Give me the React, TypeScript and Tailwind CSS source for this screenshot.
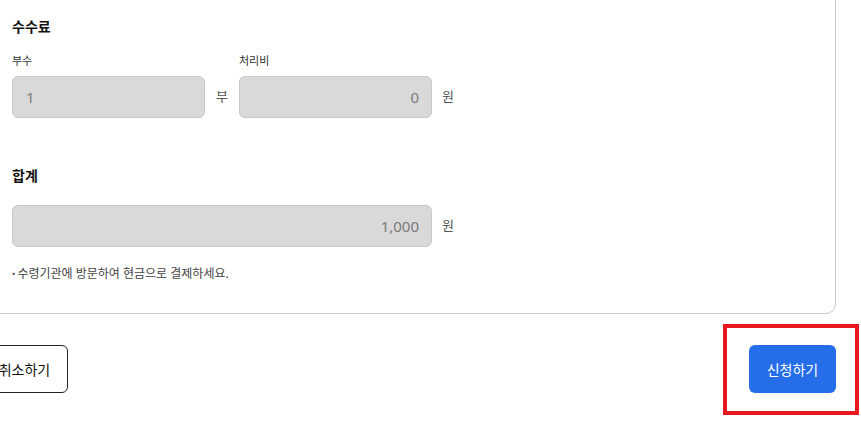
import React from 'react';

const font = { fontFamily: '"Noto Sans", "Noto Sans CJK KR", sans-serif' };

function ReadonlyField({ value, align = 'left', width }: { value: string; align?: 'left' | 'right'; width: string }) {
  return (
    <div
      className={`${width} h-[42px] flex items-center rounded-[6px] border border-[#c9c9c9] bg-[#d9d9d9] pl-[13px] pr-[12px] text-[15px] text-[#7a7a7a] ${
        align === 'right' ? 'justify-end' : 'justify-start'
      }`}
    >
      {value}
    </div>
  );
}

function App() {
  return (
    <div className="relative w-[861px] h-[428px] overflow-hidden bg-white text-[#222]" style={font}>
      <div className="ml-[-19px] mt-[-24px] w-[855px]">
        {/* fee card */}
        <section className="rounded-[10px] border border-[#c8c8c8] pl-[30px] pt-[40px] pb-[30px]">
          <h3 className="text-[14px] font-bold leading-[20px] text-[#111]">수수료</h3>

          <div className="mt-[16px] flex items-end">
            <div className="flex flex-col w-[193px]">
              <label className="text-[11px] leading-[16px] text-[#333]">부수</label>
              <div className="mt-[7px]">
                <ReadonlyField value="1" width="w-[193px]" />
              </div>
            </div>
            <span className="w-[34px] h-[42px] flex items-center justify-center text-[13px] text-[#555]">부</span>
            <div className="flex flex-col w-[193px]">
              <label className="text-[11px] leading-[16px] text-[#333]">처리비</label>
              <div className="mt-[7px]">
                <ReadonlyField value="0" align="right" width="w-[193px]" />
              </div>
            </div>
            <span className="ml-[10px] h-[42px] flex items-center text-[13px] text-[#555]">원</span>
          </div>

          <h3 className="mt-[48px] text-[14px] font-bold leading-[20px] text-[#111]">합계</h3>
          <div className="mt-[19px] flex items-center">
            <ReadonlyField value="1,000" align="right" width="w-[420px]" />
            <span className="ml-[10px] text-[13px] text-[#555]">원</span>
          </div>

          <p className="mt-[18px] text-[12px] leading-[18px] text-[#444]">
            <span className="text-[9px] align-[1px] mr-[2px]">•</span>수령기관에 방문하여 현금으로 결제하세요.
          </p>
        </section>

        {/* actions */}
        <div className="mt-[31px] flex justify-between">
          <button className="w-[87px] h-[48px] rounded-[6px] border border-[#222] bg-white text-[14px] text-[#111]">
            취소하기
          </button>
          <button className="w-[87px] h-[48px] rounded-[6px] bg-[#256de9] text-[14px] text-white">신청하기</button>
        </div>
      </div>

      {/* highlight annotation */}
      <div className="absolute left-[723px] top-[324px] w-[136px] h-[91px] border-[4px] border-[#e8191e]" />
    </div>
  );
}

export default App;
